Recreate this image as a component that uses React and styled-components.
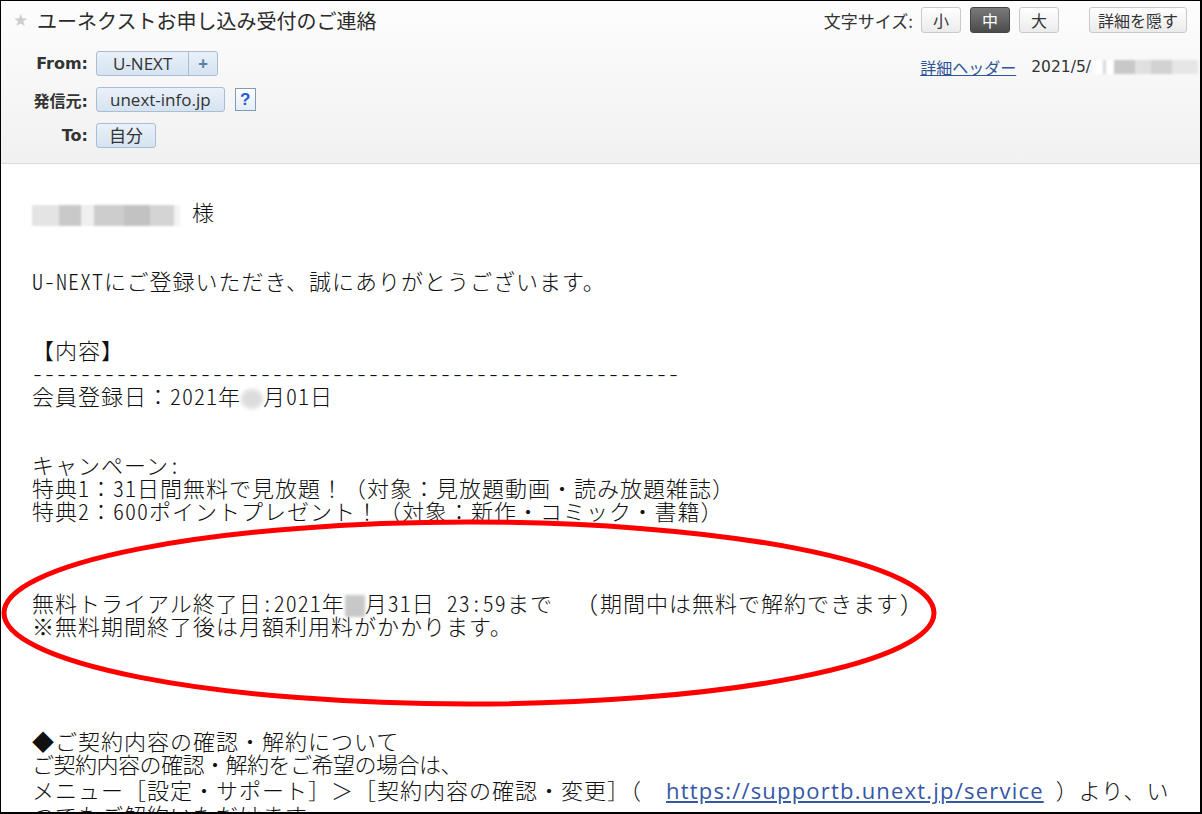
import React from "react";
import styled, { createGlobalStyle } from "styled-components";

const GlobalStyle = createGlobalStyle`
  html, body {
    margin: 0;
    padding: 0;
    background: #fff;
  }
  body {
    font-family: "Open Sans", "Noto Sans CJK JP", sans-serif;
    color: #333;
  }
`;

const Frame = styled.div`
  position: relative;
  width: 1202px;
  height: 814px;
  box-sizing: border-box;
  border: 1px solid #000;
  border-right-width: 2px;
  border-bottom-width: 2px;
  overflow: hidden;
  background: #fff;
`;

const Header = styled.div`
  height: 163px;
  box-sizing: border-box;
  padding: 0 13px 0 12px;
  background: linear-gradient(#fdfdfd, #f1f1f1);
  border-bottom: 1px solid #dadada;
`;

const TopRow = styled.div`
  display: flex;
  align-items: center;
  height: 38px;
`;

const Star = styled.span`
  width: 24px;
  color: #cdcdcd;
  font-size: 17px;
  font-family: "DejaVu Sans", sans-serif;
`;

const Title = styled.h1`
  margin: 0;
  font-size: 20px;
  font-weight: 400;
  color: #2b2b2b;
  font-family: "Noto Sans CJK JP", sans-serif;
`;

const SizeControls = styled.div`
  margin-left: auto;
  display: flex;
  align-items: center;
  gap: 9px;
`;

const SizeLabel = styled.span`
  font-size: 17px;
  color: #333;
  margin-right: -1px;
  font-family: "Noto Sans CJK JP", sans-serif;
`;

const Button = styled.button`
  height: 26px;
  min-width: ${(p) => p.$width || 40}px;
  padding: 0 8px;
  box-sizing: border-box;
  border: 1px solid ${(p) => (p.$active ? "#444" : "#c9c9c9")};
  border-radius: 3px;
  background: ${(p) =>
    p.$active
      ? "linear-gradient(#7a7a7a, #4b4b4b)"
      : "linear-gradient(#ffffff, #ebebeb)"};
  color: ${(p) => (p.$active ? "#fff" : "#333")};
  font-family: "Noto Sans CJK JP", sans-serif;
  font-size: 16px;
  line-height: 24px;
  margin-left: ${(p) => p.$gap || 0}px;
`;

const Fields = styled.div`
  display: flex;
  margin-top: 12px;
`;

const FieldGrid = styled.div`
  display: grid;
  grid-template-columns: 64px auto;
  column-gap: 8px;
  row-gap: 11px;
  align-items: center;
  margin-left: 11px;
`;

const Label = styled.span`
  justify-self: end;
  font-family: "DejaVu Sans", "Noto Sans CJK JP", sans-serif;
  font-size: 16px;
  font-weight: 700;
  color: #333;
`;

const ChipRow = styled.div`
  display: flex;
  align-items: center;
  gap: 10px;
  height: 25px;
`;

const Chip = styled.span`
  display: inline-flex;
  height: 25px;
  box-sizing: border-box;
  border: 1px solid #a9bdd3;
  border-radius: 3px;
  background: linear-gradient(#eaf1f9, #d5e3f1);
  color: #333;
  font-size: 17px;
`;

const ChipPart = styled.span`
  padding: 0 ${(p) => p.$pad || 12}px;
  line-height: 23px;
  border-left: ${(p) => (p.$divider ? "1px solid #a9bdd3" : "none")};
  color: ${(p) => (p.$divider ? "#5b7da3" : "#333")};
  font-weight: ${(p) => (p.$divider ? 700 : 400)};
`;

const Help = styled.span`
  display: inline-flex;
  align-items: center;
  justify-content: center;
  width: 21px;
  height: 23px;
  box-sizing: border-box;
  border: 1px solid #7f9db9;
  background: linear-gradient(#ffffff, #e4ecf5);
  color: #1f5bd6;
  font-weight: 700;
  font-size: 17px;
  font-family: "Liberation Sans", sans-serif;
`;

const Meta = styled.div`
  margin-left: auto;
  margin-top: 6px;
  margin-right: -13px;
  display: flex;
  align-items: center;
  gap: 15px;
  height: 20px;
  color: #333;
`;

const MetaLink = styled.a`
  color: #2f5597;
  text-decoration: underline;
  font-size: 16px;
  font-family: "Noto Sans CJK JP", sans-serif;
`;

const MetaDate = styled.span`
  display: inline-flex;
  align-items: center;
  font-family: "DejaVu Sans", sans-serif;
  font-size: 15.5px;
`;

const Redacted = styled.span`
  display: inline-block;
  vertical-align: middle;
  width: ${(p) => p.$w}px;
  height: ${(p) => p.$h || 20}px;
  background: ${(p) => p.$bg};
  border-radius: ${(p) => (p.$round ? "50%" : "0")};
  filter: blur(${(p) => p.$blur || 1.5}px);
  margin: 0 ${(p) => p.$mx || 0}px;
`;

const Body = styled.div`
  padding: 36px 0 0 31px;
  font-family: "Noto Sans CJK JP", sans-serif;
  font-weight: 300;
  font-size: 22px;
  letter-spacing: 1px;
  color: #111;
`;

const Line = styled.div`
  height: ${(p) => p.$h || 23}px;
  line-height: ${(p) => p.$h || 23}px;
  white-space: pre;
  ${(p) => (p.$ls !== undefined ? `letter-spacing: ${p.$ls}px;` : "")}
`;

/* half-width forms for ASCII runs, like a plain-text mail font */
const Half = styled.span`
  font-feature-settings: "hwid" 1;
`;

const Url = styled.a`
  font-family: "Open Sans", sans-serif;
  font-weight: 400;
  font-size: 22px;
  letter-spacing: 1.2px;
  color: #3457a6;
  text-decoration: underline;
`;

const Annotation = styled.svg`
  position: absolute;
  left: 0;
  top: 0;
  width: 100%;
  height: 100%;
  pointer-events: none;
`;

const nameBlocks =
  "linear-gradient(90deg, #e4e4e4 0 18%, #c9c9c9 18% 33%, #efefef 33% 42%, #cdcdcd 42% 62%, #c2c2c2 62% 80%, #d4d4d4 80% 96%, #f2f2f2 96% 100%)";
const dateBlocks =
  "linear-gradient(90deg, #fff 0 10%, #d9d9d9 10% 12%, #fff 12% 20%, #c8c8c8 20% 40%, #e0e0e0 40% 55%, #d2d2d2 55% 75%, #e6e6e6 75% 100%)";

const plain = (s) =>
  s.split(/([\x20-\x7e]+)/).map((part, i) =>
    /[\x20-\x7e]/.test(part) ? <Half key={i}>{part}</Half> : part
  );

const Blank = ({ n = 1 }) =>
  Array.from({ length: n }, (_, i) => <Line key={i} />);

const App = () => {
  return (
    <Frame>
      <GlobalStyle />
      <Header>
        <TopRow>
          <Star>★</Star>
          <Title>ユーネクストお申し込み受付のご連絡</Title>
          <SizeControls>
            <SizeLabel>文字サイズ:</SizeLabel>
            <Button>小</Button>
            <Button $active>中</Button>
            <Button>大</Button>
            <Button $width={96} $gap={21}>
              詳細を隠す
            </Button>
          </SizeControls>
        </TopRow>
        <Fields>
          <FieldGrid>
            <Label>From:</Label>
            <ChipRow>
              <Chip>
                <ChipPart $pad={16}>U-NEXT</ChipPart>
                <ChipPart $divider $pad={9}>
                  +
                </ChipPart>
              </Chip>
            </ChipRow>
            <Label>発信元:</Label>
            <ChipRow>
              <Chip>
                <ChipPart $pad={13}>unext-info.jp</ChipPart>
              </Chip>
              <Help>?</Help>
            </ChipRow>
            <Label>To:</Label>
            <ChipRow>
              <Chip>
                <ChipPart>自分</ChipPart>
              </Chip>
            </ChipRow>
          </FieldGrid>
          <Meta>
            <MetaLink href="#">詳細ヘッダー</MetaLink>
            <MetaDate>
              2021/5/
              <Redacted $w={105} $h={14} $bg={dateBlocks} $blur={1.2} $mx={2} />
            </MetaDate>
          </Meta>
        </Fields>
      </Header>

      <Body>
        <Line>
          <Redacted $w={148} $h={21} $bg={nameBlocks} $blur={1.2} />
          {plain(" 様")}
        </Line>
        <Blank n={2} />
        <Line>{plain("U-NEXTにご登録いただき、誠にありがとうございます。")}</Line>
        <Blank n={2} />
        <Line>【内容】</Line>
        <Line>{plain("-".repeat(54))}</Line>
        <Line>
          {plain("会員登録日：2021年")}
          <Redacted $w={22} $h={20} $bg="#dcdcdc" $round $blur={2} />
          {plain("月01日")}
        </Line>
        <Blank n={2} />
        <Line>{plain("キャンペーン:")}</Line>
        <Line>{plain("特典1：31日間無料で見放題！（対象：見放題動画・読み放題雑誌）")}</Line>
        <Line>{plain("特典2：600ポイントプレゼント！（対象：新作・コミック・書籍）")}</Line>
        <Blank n={3} />
        <Line>
          {plain("無料トライアル終了日:2021年")}
          <Redacted $w={20} $h={22} $bg="#c8c8c8" $blur={1.8} />
          {plain("月31日 23:59まで　 (期間中は無料で解約できます)")}
        </Line>
        <Line>※無料期間終了後は月額利用料がかかります。</Line>
        <Blank n={4} />
        <Line>◆ご契約内容の確認・解約について</Line>
        <Line $ls={-0.5}>ご契約内容の確認・解約をご希望の場合は、</Line>
        <Line $h={28}>
          {plain("メニュー［設定・サポート］＞［契約内容の確認・変更］（  ")}
          <Url href="#">https://supportb.unext.jp/service</Url>
          {plain(" ）より、い")}
        </Line>
        <Line>つでもご解約いただけます。</Line>
      </Body>

      <Annotation viewBox="0 0 1199 811">
        <ellipse
          cx="468"
          cy="612"
          rx="465"
          ry="91"
          fill="none"
          stroke="#ff0000"
          strokeWidth="5"
        />
      </Annotation>
    </Frame>
  );
};

export default App;
